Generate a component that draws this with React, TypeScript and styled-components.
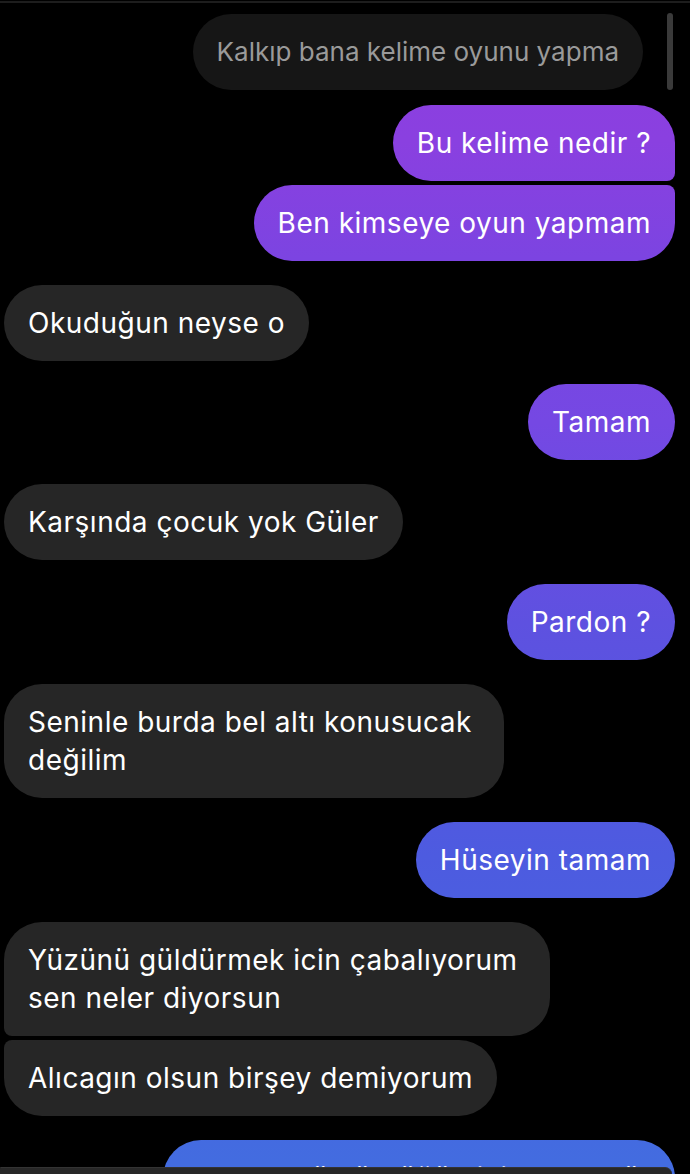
import React from "react";
import styled, { createGlobalStyle, css } from "styled-components";

const Global = createGlobalStyle`
  html, body {
    margin: 0;
    padding: 0;
    background: #000;
  }
  body {
    font-family: Inter, "Noto Sans", "Liberation Sans", sans-serif;
    -webkit-font-smoothing: antialiased;
  }
`;

const Page = styled.div`
  position: relative;
  width: 690px;
  height: 1174px;
  overflow: hidden;
  background: #000;
  padding-top: 1px;
  box-sizing: border-box;
`;

const TopRule = styled.div`
  height: 2px;
  background: #1d1d1d;
`;

const Thread = styled.div`
  display: flex;
  flex-direction: column;
  padding: 0 15px 0 4px;
`;

const ReplyRow = styled.div`
  display: flex;
  justify-content: flex-end;
  align-items: stretch;
  margin-top: 11px;
`;

const ReplyBubble = styled.div`
  background: #161616;
  color: #9a9a9a;
  font-size: 26px;
  line-height: 38px;
  padding: 19px 24px;
  border-radius: 38px;
`;

const ReplyBar = styled.div`
  width: 6px;
  margin: -1px 17px 0 24px;
  border-radius: 3px;
  background: #3a3a3a;
`;

const Group = styled.div<{ $side: "in" | "out"; $gap: number }>`
  display: flex;
  flex-direction: column;
  gap: 4px;
  margin-top: ${(p) => p.$gap}px;
  align-items: ${(p) => (p.$side === "out" ? "flex-end" : "flex-start")};
`;

type Pos = "single" | "first" | "middle" | "last";

const Bubble = styled.div<{ $side: "in" | "out"; $pos: Pos; $multi: boolean }>`
  font-size: 28px;
  line-height: 38px;
  padding: 19px ${(p) => (p.$multi ? 32 : 24)}px 19px 24px;
  color: #fff;
  border-radius: 38px;
  white-space: nowrap;
  letter-spacing: 0.5px;
  ${(p) =>
    p.$side === "out"
      ? css`
          background-image: linear-gradient(
            to bottom,
            #8c3de0 0%,
            #8a40e0 12%,
            #7c44e1 22%,
            #7548e3 36%,
            #5e51e0 53%,
            #4d5be0 73%,
            #436ce0 99%
          );
          background-attachment: fixed;
          ${p.$pos === "first" && "border-bottom-right-radius: 8px;"}
          ${p.$pos === "middle" && "border-top-right-radius: 8px; border-bottom-right-radius: 8px;"}
          ${p.$pos === "last" && "border-top-right-radius: 8px;"}
        `
      : css`
          background: #262626;
          ${p.$pos === "first" && "border-bottom-left-radius: 8px;"}
          ${p.$pos === "middle" && "border-top-left-radius: 8px; border-bottom-left-radius: 8px;"}
          ${p.$pos === "last" && "border-top-left-radius: 8px;"}
        `}
`;

const Line = styled.span`
  display: block;
`;

const Composer = styled.div`
  position: absolute;
  left: 0;
  bottom: 0;
  width: 672px;
  height: 6px;
  background: #272727;
  border-top: 1px solid #333;
  border-top-right-radius: 22px;
  border-top-left-radius: 4px;
`;

type Msg = { side: "in" | "out"; gap: number; texts: string[][] };

const groups: Msg[] = [
  { side: "out", gap: 15, texts: [["Bu kelime nedir ?"], ["Ben kimseye oyun yapmam"]] },
  { side: "in", gap: 24, texts: [["Okuduğun neyse o"]] },
  { side: "out", gap: 23, texts: [["Tamam"]] },
  { side: "in", gap: 24, texts: [["Karşında çocuk yok Güler"]] },
  { side: "out", gap: 24, texts: [["Pardon ?"]] },
  { side: "in", gap: 24, texts: [["Seninle burda bel altı konusucak", "değilim"]] },
  { side: "out", gap: 24, texts: [["Hüseyin tamam"]] },
  {
    side: "in",
    gap: 24,
    texts: [["Yüzünü güldürmek icin çabalıyorum", "sen neler diyorsun"], ["Alıcagın olsun birşey demiyorum"]],
  },
  { side: "out", gap: 24, texts: [["Tamam güldürdüğün için teşekkür"]] },
];

const posOf = (i: number, n: number): Pos =>
  n === 1 ? "single" : i === 0 ? "first" : i === n - 1 ? "last" : "middle";

export default function App() {
  return (
    <Page>
      <Global />
      <TopRule />
      <ReplyRow>
        <ReplyBubble>Kalkıp bana kelime oyunu yapma</ReplyBubble>
        <ReplyBar />
      </ReplyRow>
      <Thread>
        {groups.map((g, gi) => (
          <Group key={gi} $side={g.side} $gap={g.gap}>
            {g.texts.map((lines, i) => (
              <Bubble
                key={i}
                $side={g.side}
                $pos={posOf(i, g.texts.length)}
                $multi={lines.length > 1}
              >
                {lines.map((l, li) => (
                  <Line key={li}>{l}</Line>
                ))}
              </Bubble>
            ))}
          </Group>
        ))}
      </Thread>
      <Composer />
    </Page>
  );
}
